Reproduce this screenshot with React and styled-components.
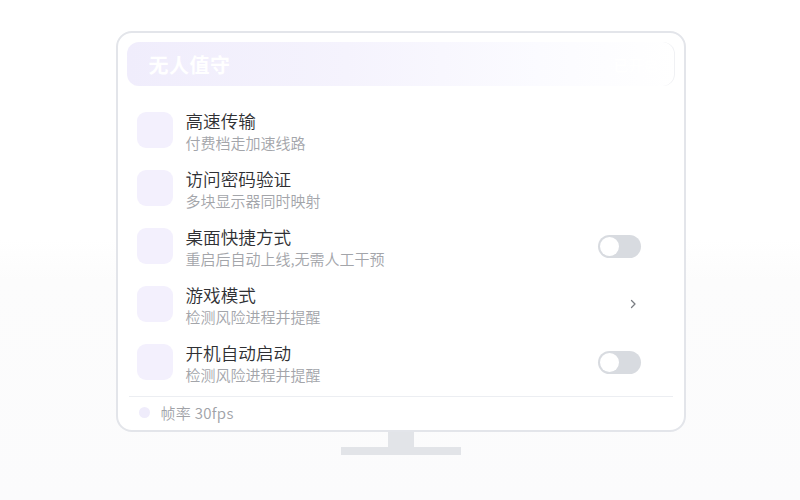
import React from 'react';
import styled, { createGlobalStyle } from 'styled-components';

const GlobalStyle = createGlobalStyle`
    html, body {
        margin: 0;
        padding: 0;
    }
    body {
        width: 800px;
        height: 500px;
        background: linear-gradient(180deg, #ffffff 0%, #ffffff 48%, #fcfcfc 56%, #fbfbfc 100%);
        font-family: "Noto Sans CJK SC", "Noto Sans", sans-serif;
        overflow: hidden;
    }
`;

const items = [
    { title: '高速传输', desc: '付费档走加速线路', action: null },
    { title: '访问密码验证', desc: '多块显示器同时映射', action: null },
    { title: '桌面快捷方式', desc: '重启后自动上线,无需人工干预', action: 'toggle' },
    { title: '游戏模式', desc: '检测风险进程并提醒', action: 'chevron' },
    { title: '开机自动启动', desc: '检测风险进程并提醒', action: 'toggle' },
];

const App = () => {
    return (
        <Page>
            <GlobalStyle />
            <Monitor>
                <Screen>
                    <Header>
                        <HeaderTitle>无人值守</HeaderTitle>
                        <HeaderExtra>已开启</HeaderExtra>
                    </Header>
                    <Body>
                        <List>
                            {items.map((item) => (
                                <Row key={item.title}>
                                    <IconBox />
                                    <Info>
                                        <Title>{item.title}</Title>
                                        <Desc>{item.desc}</Desc>
                                    </Info>
                                    {item.action === 'toggle' && (
                                        <Toggle>
                                            <Knob />
                                        </Toggle>
                                    )}
                                    {item.action === 'chevron' && (
                                        <Chevron viewBox="0 0 8 12">
                                            <path d="M2.5 2.5 L6 6 L2.5 9.5" />
                                        </Chevron>
                                    )}
                                </Row>
                            ))}
                        </List>
                        <Footer>
                            <Dot />
                            <FooterText>帧率 30fps</FooterText>
                        </Footer>
                    </Body>
                </Screen>
                <Neck />
                <Base />
            </Monitor>
        </Page>
    );
};

const Page = styled.div`
    width: 800px;
    height: 500px;
    padding-top: 31px;
    box-sizing: border-box;
    display: flex;
    justify-content: center;
`;

const Monitor = styled.div`
    display: flex;
    flex-direction: column;
    align-items: center;
    margin-left: 1px;
`;

const Screen = styled.div`
    width: 570px;
    height: 401px;
    box-sizing: border-box;
    border: 2px solid #e3e5ea;
    border-radius: 16px;
    background: #ffffff;
    padding: 9px 9px 0;
    display: flex;
    flex-direction: column;
`;

const Header = styled.div`
    height: 44px;
    border-radius: 12px;
    background: linear-gradient(90deg, #f0edfc 0%, #f5f3fd 40%, #fbfbff 75%, #ffffff 100%);
    box-shadow: inset -1px 0 0 #f0f1f4;
    display: flex;
    align-items: center;
    justify-content: space-between;
    padding: 0 16px 0 22px;
`;

const HeaderTitle = styled.div`
    color: #ffffff;
    font-size: 20px;
    font-weight: 700;
    letter-spacing: 0.5px;
`;

const HeaderExtra = styled.div`
    color: #ffffff;
    font-size: 15px;
    font-weight: 700;
`;

const Body = styled.div`
    flex: 1;
    display: flex;
    flex-direction: column;
    padding: 15px 2px 0;
`;

const List = styled.div`
    display: flex;
    flex-direction: column;
    padding-bottom: 5px;
    border-bottom: 1px solid #eceef2;
`;

const Row = styled.div`
    height: 58px;
    display: flex;
    align-items: center;
    padding: 0 32px 0 8px;
`;

const IconBox = styled.div`
    width: 36px;
    height: 36px;
    border-radius: 9px;
    background: #f3f0fd;
    flex-shrink: 0;
`;

const Info = styled.div`
    flex: 1;
    margin-left: 13px;
    display: flex;
    flex-direction: column;
    padding-top: 3px;
`;

const Title = styled.div`
    font-size: 17.6px;
    font-weight: 350;
    line-height: 22px;
    color: #2f3033;
`;

const Desc = styled.div`
    font-size: 15px;
    font-weight: 350;
    line-height: 21px;
    color: #a3a5aa;
`;

const Toggle = styled.div`
    width: 43px;
    height: 23px;
    box-sizing: border-box;
    border-radius: 12px;
    background: #d8dbe0;
    padding: 2px;
    display: flex;
    align-items: center;
`;

const Knob = styled.div`
    width: 19px;
    height: 19px;
    border-radius: 50%;
    background: #ffffff;
`;

const Chevron = styled.svg`
    width: 8px;
    height: 12px;
    margin-right: 4px;
    fill: none;
    stroke: #7a7d83;
    stroke-width: 1.3;
    stroke-linecap: round;
    stroke-linejoin: round;
`;

const Footer = styled.div`
    flex: 1;
    display: flex;
    align-items: center;
    padding-left: 10px;
    padding-bottom: 2px;
`;

const Dot = styled.div`
    width: 11px;
    height: 11px;
    border-radius: 50%;
    background: #efecfb;
`;

const FooterText = styled.div`
    margin-left: 11px;
    font-size: 15px;
    font-weight: 350;
    letter-spacing: 0.3px;
    color: #a0a2a7;
`;

const Neck = styled.div`
    width: 26px;
    height: 15px;
    background: #e2e4e8;
`;

const Base = styled.div`
    width: 120px;
    height: 8px;
    background: #e2e4e8;
`;

export default App;
